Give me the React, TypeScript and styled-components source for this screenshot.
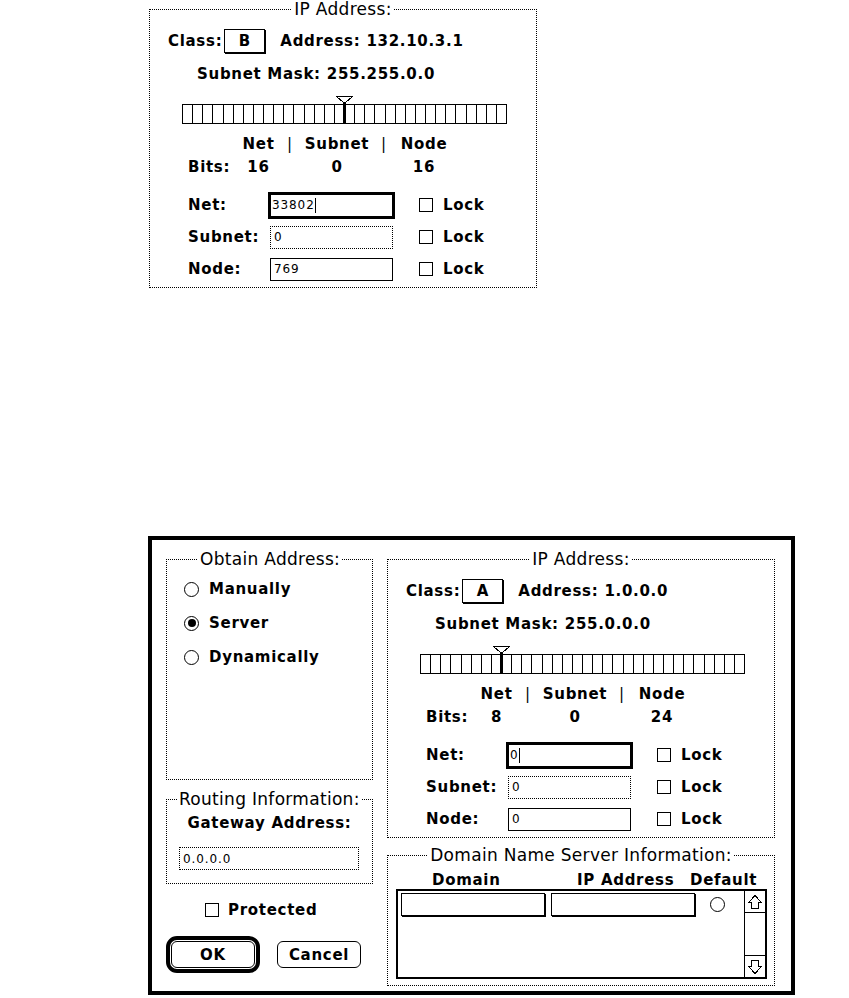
import React from 'react'
import styled, { createGlobalStyle, css } from 'styled-components'

const GlobalStyle = createGlobalStyle`
  html, body {
    margin: 0;
    padding: 0;
    background: #fff;
  }
  body {
    font-family: 'DejaVu Sans', 'Liberation Sans', sans-serif;
    color: #000;
  }
  * {
    box-sizing: border-box;
  }
`

const boldText = css`
  font-family: 'DejaVu Sans', 'Liberation Sans', sans-serif;
  font-weight: 700;
  font-size: 15px;
  line-height: 18px;
  letter-spacing: 0.7px;
  white-space: nowrap;
`

const smallText = css`
  font-family: 'DejaVu Sans', 'Liberation Sans', sans-serif;
  font-weight: 400;
  font-size: 12px;
  letter-spacing: 0.9px;
`

type IpData = {
    cls: string
    address: string
    mask: string
    bits: [number, number, number]
    net: string
    subnet: string
    node: string
}

const topPanel: IpData = {
    cls: 'B',
    address: '132.10.3.1',
    mask: '255.255.0.0',
    bits: [16, 0, 16],
    net: '33802',
    subnet: '0',
    node: '769',
}

const dialogPanel: IpData = {
    cls: 'A',
    address: '1.0.0.0',
    mask: '255.0.0.0',
    bits: [8, 0, 24],
    net: '0',
    subnet: '0',
    node: '0',
}

const UpArrow = () => (
    <svg width="16" height="16" viewBox="0 0 16 16" shapeRendering="crispEdges">
        <path d="M8 1.5L14.5 8.5H11.5V14.5H4.5V8.5H1.5Z" fill="#fff" stroke="#000" />
    </svg>
)

const DownArrow = () => (
    <svg width="16" height="16" viewBox="0 0 16 16" shapeRendering="crispEdges">
        <path d="M8 14.5L14.5 7.5H11.5V1.5H4.5V7.5H1.5Z" fill="#fff" stroke="#000" />
    </svg>
)

const SliderThumb = ({ left }: { left: string }) => (
    <ThumbSvg style={{ left }} width="17" height="28" viewBox="0 0 17 28" shapeRendering="crispEdges">
        <path d="M0.5 0.5H16.5M0.5 0.5L7.5 6.5M16.5 0.5L9.5 6.5" stroke="#000" fill="none" />
        <rect x="7" y="6" width="3" height="22" fill="#000" />
    </ThumbSvg>
)

const IpAddressPanel = ({ data }: { data: IpData }) => {
    const rows = [
        { label: 'Net:', value: data.net, kind: 'active' as const },
        { label: 'Subnet:', value: data.subnet, kind: 'dotted' as const },
        { label: 'Node:', value: data.node, kind: 'solid' as const },
    ]

    return (
        <Group $width={388}>
            <Title>IP Address:</Title>
            <ClassRow>
                <Bold>Class:</Bold>
                <Popup>{data.cls}</Popup>
                <Bold>Address: {data.address}</Bold>
            </ClassRow>
            <MaskLine>Subnet Mask: {data.mask}</MaskLine>
            <Slider>
                <Bar>
                    {Array.from({ length: 32 }, (_, i) => (
                        <BitCell key={i} />
                    ))}
                </Bar>
                <SliderThumb left={`calc(${(data.bits[0] / 32) * 100}% - 8.5px)`} />
            </Slider>
            <BitsGrid>
                <span />
                <Centered>Net</Centered>
                <Sep>|</Sep>
                <Centered>Subnet</Centered>
                <Sep>|</Sep>
                <Centered>Node</Centered>
                <Bold>Bits:</Bold>
                <Centered>{data.bits[0]}</Centered>
                <span />
                <Centered>{data.bits[1]}</Centered>
                <span />
                <Centered>{data.bits[2]}</Centered>
            </BitsGrid>
            <FieldRows>
                {rows.map((row) => (
                    <React.Fragment key={row.label}>
                        <Bold>{row.label}</Bold>
                        <Field $kind={row.kind}>
                            {row.value}
                            {row.kind === 'active' && <Caret />}
                        </Field>
                        <Option $offset={24}>
                            <CheckBox />
                            <Bold>Lock</Bold>
                        </Option>
                    </React.Fragment>
                ))}
            </FieldRows>
        </Group>
    )
}

const App = () => {
    return (
        <Page>
            <GlobalStyle />
            <TopArea>
                <IpAddressPanel data={topPanel} />
            </TopArea>
            <Window>
                <LeftColumn>
                    <Group $height={228}>
                        <Title $offset={31}>Obtain Address:</Title>
                        <RadioList>
                            <Option>
                                <Radio />
                                <Bold>Manually</Bold>
                            </Option>
                            <Option>
                                <Radio>
                                    <RadioDot />
                                </Radio>
                                <Bold>Server</Bold>
                            </Option>
                            <Option>
                                <Radio />
                                <Bold>Dynamically</Bold>
                            </Option>
                        </RadioList>
                    </Group>
                    <RoutingGroup>
                        <Title $offset={10}>Routing Information:</Title>
                        <GatewayLabel>Gateway Address:</GatewayLabel>
                        <GatewayField>0.0.0.0</GatewayField>
                    </RoutingGroup>
                    <ProtectedRow>
                        <CheckBox />
                        <Bold>Protected</Bold>
                    </ProtectedRow>
                    <ButtonRow>
                        <DefaultRing>
                            <Button>OK</Button>
                        </DefaultRing>
                        <Button>Cancel</Button>
                    </ButtonRow>
                </LeftColumn>
                <RightColumn>
                    <IpAddressPanel data={dialogPanel} />
                    <Group>
                        <Title>Domain Name Server Information:</Title>
                        <DnsHeader>
                            <Bold>Domain</Bold>
                            <Bold>IP Address</Bold>
                            <Bold>Default</Bold>
                        </DnsHeader>
                        <DnsList>
                            <DnsRows>
                                <DnsRow>
                                    <DnsField />
                                    <DnsField $gap={6} />
                                    <DnsRadio />
                                </DnsRow>
                            </DnsRows>
                            <ScrollBar>
                                <ScrollButton $dir="up">
                                    <UpArrow />
                                </ScrollButton>
                                <ScrollButton $dir="down">
                                    <DownArrow />
                                </ScrollButton>
                            </ScrollBar>
                        </DnsList>
                    </Group>
                </RightColumn>
            </Window>
        </Page>
    )
}

export default App

const Page = styled.div`
    display: flex;
    flex-direction: column;
    align-items: flex-start;
    width: 849px;
    min-height: 998px;
    overflow: hidden;
`

const TopArea = styled.div`
    padding: 2px 0 0 149px;
`

const Window = styled.div`
    margin: 248px 0 0 148px;
    width: 647px;
    border: 4px solid #000;
    padding: 12px 16px 5px 14px;

    display: grid;
    grid-template-columns: 207px 388px;
    column-gap: 14px;
`

const LeftColumn = styled.div`
    display: flex;
    flex-direction: column;
`

const RightColumn = styled.div`
    display: flex;
    flex-direction: column;
    gap: 10px;
`

const Group = styled.fieldset<{ $height?: number; $width?: number }>`
    margin: 0;
    padding: 0;
    min-width: 0;
    width: ${({ $width }) => ($width ? `${$width}px` : '100%')};
    border: 1px dotted #000;
    ${({ $height }) => $height && `height: ${$height}px;`}
`

const Title = styled.legend<{ $offset?: number }>`
    font-family: 'DejaVu Sans', 'Liberation Sans', sans-serif;
    font-weight: 400;
    font-size: 17px;
    line-height: 14px;
    letter-spacing: 0.3px;
    padding: 0 2px;
    white-space: nowrap;
    ${({ $offset }) =>
        $offset !== undefined
            ? `margin-left: ${$offset}px; margin-right: 0;`
            : 'margin-left: auto; margin-right: auto;'}
`

const Bold = styled.span`
    ${boldText}
`

const ClassRow = styled.div`
    display: flex;
    align-items: center;
    height: 24px;
    margin-top: 13px;
    padding-left: 18px;
`

const Popup = styled.div`
    ${boldText}
    width: 41px;
    height: 24px;
    margin: 0 15px 0 2px;
    border: 1px solid #000;
    box-shadow: 1px 1px 0 #000;

    display: flex;
    align-items: center;
    justify-content: center;
`

const MaskLine = styled.div`
    ${boldText}
    margin-top: 12px;
    padding-left: 47px;
`

const Slider = styled.div`
    position: relative;
    width: 325px;
    margin: 13px 0 0 32px;
    padding-top: 8px;
`

const Bar = styled.div`
    display: flex;
    height: 20px;
    border: 1px solid #000;
`

const BitCell = styled.div`
    flex: 1;
    border-left: 1px solid #000;

    &:first-child {
        border-left: 0;
    }
`

const ThumbSvg = styled.svg`
    position: absolute;
    top: 0;
    display: block;
`

const BitsGrid = styled.div`
    ${boldText}
    margin-top: 11px;
    padding-left: 38px;

    display: grid;
    grid-template-columns: 47px 47px 16px 78px 16px 64px;
    row-gap: 5px;
`

const Centered = styled.span`
    text-align: center;
`

const Sep = styled.span`
    text-align: center;
    font-weight: 400;
`

const FieldRows = styled.div`
    margin-top: 13px;
    padding: 0 0 2px 38px;

    display: grid;
    grid-template-columns: 80px 127px auto;
    grid-auto-rows: 32px;
    align-items: center;
`

const Field = styled.div<{ $kind: 'active' | 'dotted' | 'solid' }>`
    ${smallText}
    display: flex;
    align-items: center;
    ${({ $kind }) =>
        $kind === 'active'
            ? `
        width: 127px;
        height: 27px;
        border: 3px solid #000;
        padding-left: 1px;
    `
            : `
        width: 123px;
        height: 23px;
        margin: 2px;
        border: 1px ${$kind === 'dotted' ? 'dotted' : 'solid'} #000;
        padding-left: 3px;
    `}
`

const Caret = styled.span`
    width: 1px;
    height: 15px;
    background: #000;
`

const Option = styled.div<{ $offset?: number }>`
    display: flex;
    align-items: center;
    gap: 10px;
    height: 34px;
    margin-left: ${({ $offset }) => $offset ?? 0}px;
`

const CheckBox = styled.span`
    width: 14px;
    height: 14px;
    border: 1px solid #000;
    flex-shrink: 0;
`

const Radio = styled.span`
    width: 15px;
    height: 15px;
    border: 1px solid #000;
    border-radius: 50%;
    flex-shrink: 0;

    display: flex;
    align-items: center;
    justify-content: center;
`

const RadioDot = styled.span`
    width: 8px;
    height: 8px;
    border-radius: 50%;
    background: #000;
`

const RadioList = styled.div`
    margin-top: 6px;
    padding-left: 17px;
`

const RoutingGroup = styled(Group)`
    margin-top: 12px;
`

const GatewayLabel = styled.div`
    ${boldText}
    margin-top: 8px;
    text-align: center;
`

const GatewayField = styled.div`
    ${smallText}
    width: 180px;
    height: 23px;
    margin: 15px 0 13px 12px;
    padding-left: 3px;
    border: 1px dotted #000;

    display: flex;
    align-items: center;
`

const ProtectedRow = styled.div`
    display: flex;
    align-items: center;
    gap: 9px;
    height: 18px;
    margin-top: 17px;
    padding-left: 39px;
`

const ButtonRow = styled.div`
    display: flex;
    align-items: center;
    gap: 17px;
    margin-top: 17px;
`

const DefaultRing = styled.div`
    border: 4px solid #000;
    border-radius: 11px;
    padding: 1px;
    display: flex;
`

const Button = styled.button`
    ${boldText}
    width: 84px;
    height: 27px;
    padding: 0;
    border: 1px solid #000;
    border-radius: 6px;
    background: #fff;
    color: #000;
`

const DnsHeader = styled.div`
    margin-top: 9px;
    padding-left: 44px;

    display: grid;
    grid-template-columns: 145px 113px auto;
`

const DnsList = styled.div`
    width: 371px;
    height: 90px;
    margin-left: 8px;
    margin-bottom: 6px;
    border: 2px solid #000;
    display: flex;
`

const DnsRows = styled.div`
    flex: 1;
    padding: 2px 0 0 3px;
`

const DnsRow = styled.div`
    display: flex;
    align-items: center;
`

const DnsField = styled.div<{ $gap?: number }>`
    width: 144px;
    height: 23px;
    margin-left: ${({ $gap }) => $gap ?? 0}px;
    border: 1px solid #000;
    box-shadow: 1px 1px 0 #000;
`

const DnsRadio = styled(Radio)`
    margin-left: 15px;
`

const ScrollBar = styled.div`
    width: 21px;
    border-left: 1px solid #000;

    display: flex;
    flex-direction: column;
    justify-content: space-between;
`

const ScrollButton = styled.div<{ $dir: 'up' | 'down' }>`
    height: 22px;
    ${({ $dir }) => ($dir === 'up' ? 'border-bottom: 1px solid #000;' : 'border-top: 1px solid #000;')}

    display: flex;
    align-items: center;
    justify-content: center;
`
